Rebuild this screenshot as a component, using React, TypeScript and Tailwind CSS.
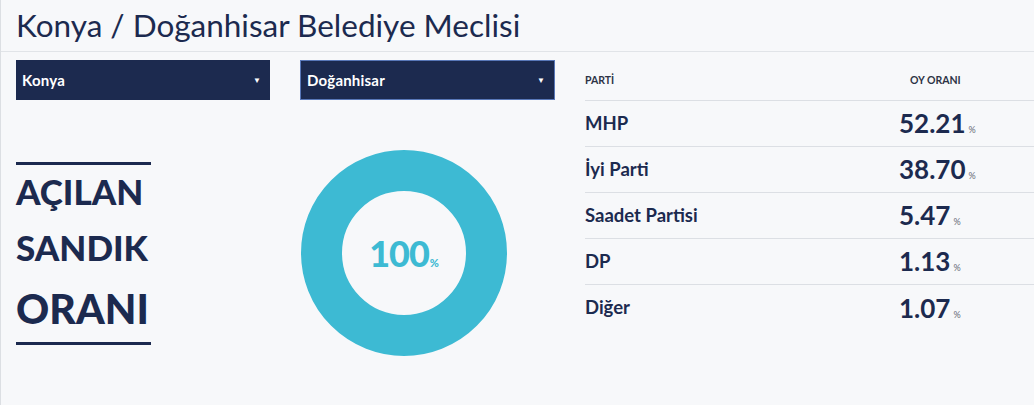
import React from "react";

type Row = { name: string; value: string };

const rows: Row[] = [
  { name: "MHP", value: "52.21" },
  { name: "İyi Parti", value: "38.70" },
  { name: "Saadet Partisi", value: "5.47" },
  { name: "DP", value: "1.13" },
  { name: "Diğer", value: "1.07" },
];

type SelectBoxProps = {
  label: string;
  focused?: boolean;
  width: string;
};

const SelectBox = ({ label, focused = false, width }: SelectBoxProps) => (
  <div
    className={`${width} h-[40px] bg-[#1c2a4f] flex items-center justify-between pl-[6px] pr-[9px] ${
      focused ? "border border-[#5877b8]" : ""
    }`}
  >
    <span className="text-white text-[15px] font-bold tracking-[0.2px]">{label}</span>
    <span className="text-white text-[8px] leading-none">▼</span>
  </div>
);

export default function App() {
  return (
    <div className="min-h-[405px] bg-[#f7f8fa] border-l border-[#dcdfe3] font-['Lato',sans-serif] text-[#1c2a4f]">
      <header className="h-[52px] border-b border-[#e1e4e8] pl-[15px] flex items-center">
        <h1 className="text-[31.5px] leading-none">
          Konya / Doğanhisar Belediye Meclisi
        </h1>
      </header>

      <div className="flex">
        <div className="w-[584px] pl-[15px]">
          <div className="flex gap-[30px] mt-[8px]">
            <SelectBox label="Konya" width="w-[254px]" />
            <SelectBox label="Doğanhisar" width="w-[255px]" focused />
          </div>

          <div className="flex mt-[50px]">
            <div className="w-[285px] pt-[12px]">
              <div className="w-[135px]">
                <div className="h-[3px] bg-[#1c2a4f]" />
                <div className="text-[35px] font-black leading-[52px]">
                  AÇILAN
                </div>
                <div className="text-[35px] font-black leading-[60px]">
                  SANDIK
                </div>
                <div className="text-[41px] font-black leading-[63px]">
                  ORANI
                </div>
                <div className="h-[3px] bg-[#1c2a4f] mt-[2px]" />
              </div>
            </div>

            <div className="w-[206px] h-[206px] rounded-full border-[41px] border-[#3dbad3] flex items-center justify-center">
              <span className="flex items-baseline text-[#3dbad3] font-black">
                <span className="text-[36px] leading-none tracking-[-1px]">100</span>
                <span className="text-[11px] ml-[1px]">%</span>
              </span>
            </div>
          </div>
        </div>

        <div className="flex-1">
          <div className="grid grid-cols-[314px_1fr] h-[49px] border-b border-[#dcdfe4] pt-[22px] text-[10.5px] leading-[12px] font-bold text-[#2d3345]">
            <div>PARTİ</div>
            <div className="pl-[11px]">OY ORANI</div>
          </div>
          {rows.map((row, i) => (
            <div
              key={row.name}
              className={`grid grid-cols-[314px_1fr] h-[46px] items-center ${
                i < rows.length - 1 ? "border-b border-[#dcdfe4]" : ""
              }`}
            >
              <div className="text-[18.5px] font-bold">{row.name}</div>
              <div className="flex items-baseline">
                <span className="text-[26px] font-bold leading-none">
                  {row.value}
                </span>
                <span className="text-[9px] text-[#666a75] ml-[3px]">%</span>
              </div>
            </div>
          ))}
        </div>
      </div>
    </div>
  );
}
